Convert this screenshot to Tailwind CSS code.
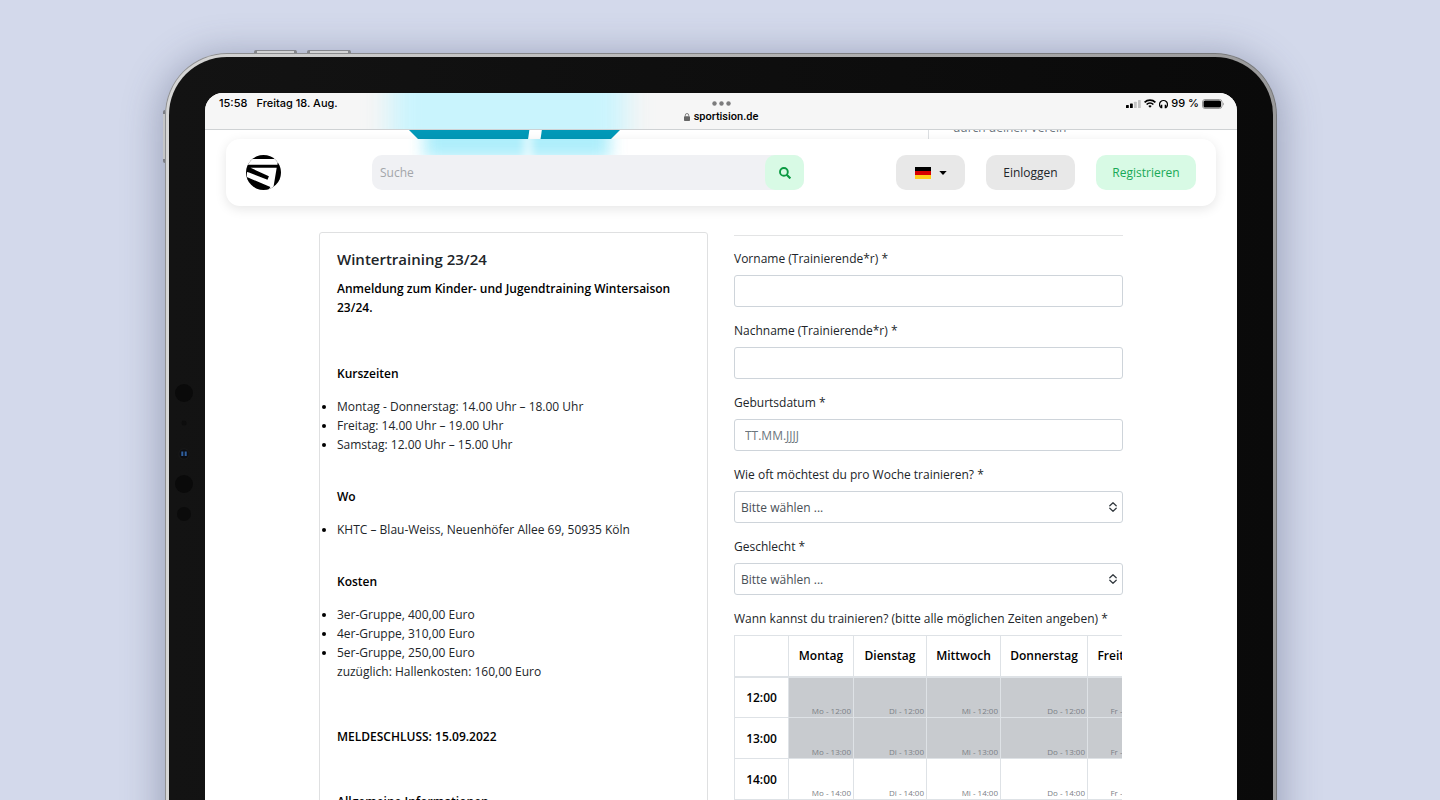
<!DOCTYPE html>
<html lang="de">
<head>
<meta charset="utf-8">
<meta name="viewport" content="width=device-width, initial-scale=1">
<title>Wintertraining 23/24 – sportision.de</title>
<script src="https://cdn.jsdelivr.net/npm/@tailwindcss/browser@4"></script>
</head>
<body class="h-screen overflow-hidden bg-[#d3d9eb] font-['Open_Sans',sans-serif] text-xs leading-[19px] text-[#212529]">
<div class="flex h-full flex-col overflow-hidden pt-[53px] pr-[163px] pl-[165px]">

  <!-- Tablet body -->
  <div class="relative flex grow flex-col rounded-t-[62px] bg-linear-to-r from-[#8f9092] to-[#77787a] p-px pb-0 shadow-[0_6px_36px_6px_rgba(70,78,110,0.36)]">
    <span class="absolute -top-[3px] left-[89px] h-[3px] w-[43px] rounded-t-xs border-x-3 border-t border-[#85878c] bg-[#d2d3d5]"></span>
    <span class="absolute -top-[3px] left-[142px] h-[3px] w-[44px] rounded-t-xs border-x-3 border-t border-[#85878c] bg-[#d2d3d5]"></span>
    <span class="absolute top-[57px] -left-[2px] h-[53px] w-[2px] rounded-l-xs border-y-4 border-[#7b7d84] bg-[#c4c5c7]"></span>

    <div class="flex min-h-0 grow flex-col rounded-t-[61px] bg-linear-to-r from-[#d6d6d6] via-[#b5b5b5] to-[#9a9a9b] p-[3px] pb-0">
      <div class="relative flex min-h-0 grow flex-col rounded-t-[58px] bg-linear-to-r from-[#131313] to-[#0a0a0a] px-9 pt-9">

        <!-- Front camera and sensors -->
        <svg class="absolute top-[320px] left-[5px] h-[150px] w-5" viewBox="0 0 20 150" aria-hidden="true">
          <circle cx="10" cy="16" r="9" fill="#0a0a0a"/>
          <circle cx="10" cy="46" r="2.500" fill="#0d0d0d"/>
          <circle cx="10" cy="77" r="6" fill="#171717"/>
          <circle cx="10" cy="77" r="4.500" fill="#0b0d12"/>
          <path d="M7.300 74.500h2v4.500h-2zM10.700 74.500h2v4.500h-2z" fill="#2f5f9e"/>
          <circle cx="10" cy="107" r="9" fill="#0a0a0a"/>
          <circle cx="10" cy="137" r="7" fill="#0b0b0b"/>
        </svg>

        <!-- Screen -->
        <div class="relative flex min-h-0 grow flex-col overflow-hidden rounded-t-[18px] bg-white">

          <!-- Status bar -->
          <div class="relative z-20 grid h-[37px] shrink-0 grid-cols-3 overflow-hidden border-b border-[#cfd2d4] bg-[#f6f6f6] font-[Inter,sans-serif] text-[11px] font-medium leading-[14px] text-black">
            <span class="absolute -top-8 left-[186px] h-24 w-[234px] bg-[#c9f4fd] blur-[14px]"></span>
            <div class="relative flex gap-[9px] pt-[3px] pl-3.5"><span>15:58</span><span>Freitag 18. Aug.</span></div>
            <div class="relative flex flex-col items-center pt-2">
              <svg class="h-[5px] w-[19px]" viewBox="0 0 19 5" fill="#7c7c7d" aria-hidden="true"><circle cx="2.500" cy="2.500" r="2.200"/><circle cx="9.500" cy="2.500" r="2.200"/><circle cx="16.500" cy="2.500" r="2.200"/></svg>
              <div class="mt-1 flex items-center gap-1 font-[Roboto,sans-serif]">
                <svg class="h-2 w-[6px]" viewBox="0 0 6 8" aria-hidden="true"><rect y="3.300" width="6" height="4.700" rx="0.800" fill="#666"/><path d="M1.300 3.600V2.200a1.700 1.700 0 0 1 3.400 0v1.400" fill="none" stroke="#777" stroke-width="0.900"/></svg>
                <span>sportision.de</span>
              </div>
            </div>
            <div class="relative flex items-start justify-end gap-[3px] pt-[3px] pr-[13px]">
              <svg class="mt-[4px] h-2 w-[15px]" viewBox="0 0 15 8" aria-hidden="true"><rect y="5" width="2.800" height="3" rx=".6"/><rect x="4" y="3.500" width="2.800" height="4.500" rx=".6"/><rect x="8" y="1.700" width="2.800" height="6.300" rx=".6" fill="#c4c4c4"/><rect x="12" width="2.800" height="8" rx=".6" fill="#c4c4c4"/></svg>
              <svg class="mt-[3px] h-[9px] w-3" viewBox="0 0 12 9" fill="none" stroke="#000" stroke-width="1.700" aria-hidden="true"><path d="M.6 3.400a7.700 7.700 0 0 1 10.800 0M2.600 5.500a4.900 4.900 0 0 1 6.800 0"/><path d="M6 8.700 4.300 7a2.500 2.500 0 0 1 3.400 0z" fill="#000" stroke="none"/></svg>
              <svg class="mt-[3px] h-2.5 w-[9px]" viewBox="0 0 9 10" fill="none" stroke="#000" aria-hidden="true"><path d="M2 8.600A4 4 0 1 1 7 8.600" stroke-width="1.200"/><path d="M2.500 5.800v3.400M6.500 5.800v3.400" stroke-width="1.600"/></svg>
              <span>99 %</span>
              <svg class="mt-[3px] h-2.5 w-[22px]" viewBox="0 0 22 10" aria-hidden="true"><rect x=".5" y=".5" width="19.500" height="9" rx="2.500" fill="none" stroke="#9a9a9a"/><rect x="1.500" y="1.500" width="17.500" height="7" rx="1.600"/><path d="M20.800 3.500v3c.7-.2 1-.8 1-1.500s-.3-1.300-1-1.500z" fill="#9a9a9a"/></svg>
            </div>
          </div>

          <!-- Page content that has scrolled beneath the bars -->
          <svg class="absolute top-[36px] left-[203px] h-[11px] w-[213px]" viewBox="0 0 213 11" fill="#0299b8" aria-hidden="true"><path d="M0 0h121.500l-1.500 10.500H10.500z"/><path d="M134 0h79l-10.500 10.500h-70z"/></svg>
          <div class="absolute top-[25px] right-[114px] z-10 h-[22px] w-[195px] border-l border-[#dcdfe2] pl-6 text-[#6c757d]">durch deinen Verein</div>

          <!-- Floating header -->
          <header class="relative z-10 mx-[21px] mt-[9px] flex h-[67px] shrink-0 items-center rounded-[14px] bg-white px-5 shadow-[0_3px_12px_rgba(0,0,0,0.1)]">
            <span class="absolute top-0 left-[182px] h-4 w-[220px] overflow-hidden">
              <span class="absolute -top-6 left-4 h-11 w-[186px] bg-[#aeeefb] blur-[8px]"></span>
              <span class="absolute -top-2 left-[116px] h-10 w-2 bg-white/70 blur-[4px]"></span>
            </span>
            <a href="#" class="relative mr-[91px] block size-[35px] shrink-0" aria-label="Sportision">
              <svg class="size-full" viewBox="0 0 35 35" aria-hidden="true">
                <defs><clipPath id="disc"><circle cx="17.500" cy="17.500" r="17.500"/></clipPath></defs>
                <g clip-path="url(#disc)">
                  <rect width="35" height="35"/>
                  <path d="M0 4h35v4h-3.500v1.700H0z" fill="#fff"/>
                  <path d="M4.500 12.800h26.200L27.500 32l-.8 3h-4.200l1.900-3L.8 22 1 17l2 .6 18.500 7.100 1.400-3.400z" fill="#fff"/>
                </g>
              </svg>
            </a>
            <form class="relative mr-[91px] flex h-[35px] max-w-[432px] grow rounded-[10px] bg-[#f0f1f4]" role="search">
              <input type="search" aria-label="Suche" placeholder="Suche" class="min-w-0 grow bg-transparent px-2 outline-none placeholder:text-[#a3a6aa]">
              <button type="button" aria-label="Suchen" class="flex w-[39px] items-center justify-center rounded-[10px] bg-[#d8fae5]">
                <svg class="size-3" viewBox="0 0 12 12" fill="none" stroke="#0b9a42" stroke-width="1.900" aria-hidden="true"><circle cx="4.900" cy="4.900" r="3.900"/><path d="m7.700 7.700 3.700 3.700" stroke-width="2.200"/></svg>
              </button>
            </form>
            <div class="ml-auto flex gap-[21px]">
              <button type="button" aria-label="Sprache: Deutsch" class="flex h-[35px] w-[69px] items-center justify-center gap-2 rounded-[10px] bg-[#e8e8e8]">
                <svg class="h-3 w-4" viewBox="0 0 16 12" aria-hidden="true"><path d="M0 0h16v4H0z"/><path d="M0 4h16v4H0z" fill="#d80000"/><path d="M0 8h16v4H0z" fill="#ffce1b"/></svg>
                <svg class="h-1 w-2" viewBox="0 0 8 4" aria-hidden="true"><path d="M.3 0h7.400L4 4z"/></svg>
              </button>
              <button type="button" class="h-[35px] w-[89px] rounded-[10px] bg-[#e8e8e8]">Einloggen</button>
              <button type="button" class="h-[35px] w-[100px] rounded-[10px] bg-[#d8fae5] text-[#18a957]">Registrieren</button>
            </div>
          </header>

          <main class="mx-[114px] mt-[26px] grid grid-cols-2 gap-[26px]">
            <section class="rounded-[3px] border border-[#dfe0e1] px-[17px] pt-4 pb-12">
              <h1 class="text-[15px] leading-5 font-semibold">Wintertraining 23/24</h1>
              <p class="mt-[10px] font-semibold text-black">Anmeldung zum Kinder- und Jugendtraining Wintersaison 23/24.</p>
              <h2 class="mt-[47px] font-semibold text-black">Kurszeiten</h2>
              <ul class="mt-[14px] list-disc marker:text-black">
                <li>Montag - Donnerstag: 14.00 Uhr – 18.00 Uhr</li>
                <li>Freitag: 14.00 Uhr – 19.00 Uhr</li>
                <li>Samstag: 12.00 Uhr – 15.00 Uhr</li>
              </ul>
              <h2 class="mt-[33px] font-semibold text-black">Wo</h2>
              <ul class="mt-[14px] list-disc marker:text-black">
                <li>KHTC – Blau-Weiss, Neuenhöfer Allee 69, 50935 Köln</li>
              </ul>
              <h2 class="mt-[33px] font-semibold text-black">Kosten</h2>
              <ul class="mt-[14px] list-disc marker:text-black">
                <li>3er-Gruppe, 400,00 Euro</li>
                <li>4er-Gruppe, 310,00 Euro</li>
                <li>5er-Gruppe, 250,00 Euro<br>zuzüglich: Hallenkosten: 160,00 Euro</li>
              </ul>
              <p class="mt-[46px] font-semibold text-black">MELDESCHLUSS: 15.09.2022</p>
              <h2 class="mt-[46px] font-semibold text-black">Allgemeine Informationen</h2>
            </section>

            <form class="mt-[3px] flex min-w-0 flex-col gap-[14px] border-t border-[#e3e4e5] pt-[13px]">
              <div class="flex flex-col gap-[7px]">
                <label for="vorname">Vorname (Trainierende*r) *</label>
                <input id="vorname" type="text" class="h-8 rounded-[3px] border border-[#ced4da] px-2.5">
              </div>
              <div class="flex flex-col gap-[7px]">
                <label for="nachname">Nachname (Trainierende*r) *</label>
                <input id="nachname" type="text" class="h-8 rounded-[3px] border border-[#ced4da] px-2.5">
              </div>
              <div class="flex flex-col gap-[7px]">
                <label for="geburt">Geburtsdatum *</label>
                <input id="geburt" type="text" placeholder="TT.MM.JJJJ" class="h-8 rounded-[3px] border border-[#ced4da] px-2.5 placeholder:text-[#6c757d]">
              </div>
              <div class="flex flex-col gap-[7px]">
                <label for="oft">Wie oft möchtest du pro Woche trainieren? *</label>
                <div class="relative">
                  <select id="oft" class="block h-8 w-full appearance-none rounded-[3px] border border-[#ced4da] bg-white px-1.5 text-[#495057]"><option>Bitte wählen ...</option></select>
                  <svg class="pointer-events-none absolute top-[11px] right-1.5 h-2.5 w-2" viewBox="0 0 8 10" fill="none" stroke="#343a40" stroke-width="1.300" stroke-linecap="round" stroke-linejoin="round" aria-hidden="true"><path d="M.8 3.700 4 .8l3.200 2.900M.8 6.300 4 9.200l3.200-2.900"/></svg>
                </div>
              </div>
              <div class="flex flex-col gap-[7px]">
                <label for="geschlecht">Geschlecht *</label>
                <div class="relative">
                  <select id="geschlecht" class="block h-8 w-full appearance-none rounded-[3px] border border-[#ced4da] bg-white px-1.5 text-[#495057]"><option>Bitte wählen ...</option></select>
                  <svg class="pointer-events-none absolute top-[11px] right-1.5 h-2.5 w-2" viewBox="0 0 8 10" fill="none" stroke="#343a40" stroke-width="1.300" stroke-linecap="round" stroke-linejoin="round" aria-hidden="true"><path d="M.8 3.700 4 .8l3.200 2.900M.8 6.300 4 9.200l3.200-2.900"/></svg>
                </div>
              </div>
              <div class="flex flex-col gap-[7px]">
                <p id="zeiten">Wann kannst du trainieren? (bitte alle möglichen Zeiten angeben) *</p>
                <div class="mr-px overflow-hidden">
                  <table aria-labelledby="zeiten" class="w-[414px] table-fixed border-collapse [&_td]:h-[41px] [&_td]:border [&_td]:border-[#dee2e6] [&_td]:px-0.5 [&_td]:pb-px [&_td]:text-right [&_td]:align-bottom [&_td]:text-[8px] [&_td]:leading-[10px] [&_td]:text-[#7b8086] [&_th]:h-[41px] [&_th]:border [&_th]:border-[#dee2e6] [&_th]:p-0 [&_th]:text-center [&_th]:font-semibold [&_th]:text-black">
                    <colgroup><col class="w-[54px]"><col class="w-[65px]"><col class="w-[73px]"><col class="w-[74px]"><col class="w-[87px]"><col></colgroup>
                    <thead><tr class="border-b-2 border-[#dee2e6]"><td></td><th scope="col">Montag</th><th scope="col">Dienstag</th><th scope="col">Mittwoch</th><th scope="col">Donnerstag</th><th scope="col">Freitag</th></tr></thead>
                    <tbody>
                      <tr class="[&_td]:bg-[#c8cbcf]"><th scope="row">12:00</th><td>Mo - 12:00</td><td>Di - 12:00</td><td>Mi - 12:00</td><td>Do - 12:00</td><td>Fr - 12:00</td></tr>
                      <tr class="[&_td]:bg-[#c8cbcf]"><th scope="row">13:00</th><td>Mo - 13:00</td><td>Di - 13:00</td><td>Mi - 13:00</td><td>Do - 13:00</td><td>Fr - 13:00</td></tr>
                      <tr><th scope="row">14:00</th><td>Mo - 14:00</td><td>Di - 14:00</td><td>Mi - 14:00</td><td>Do - 14:00</td><td>Fr - 14:00</td></tr>
                    </tbody>
                  </table>
                </div>
              </div>
            </form>
          </main>
        </div>
      </div>
    </div>
  </div>
</div>
</body>
</html>
